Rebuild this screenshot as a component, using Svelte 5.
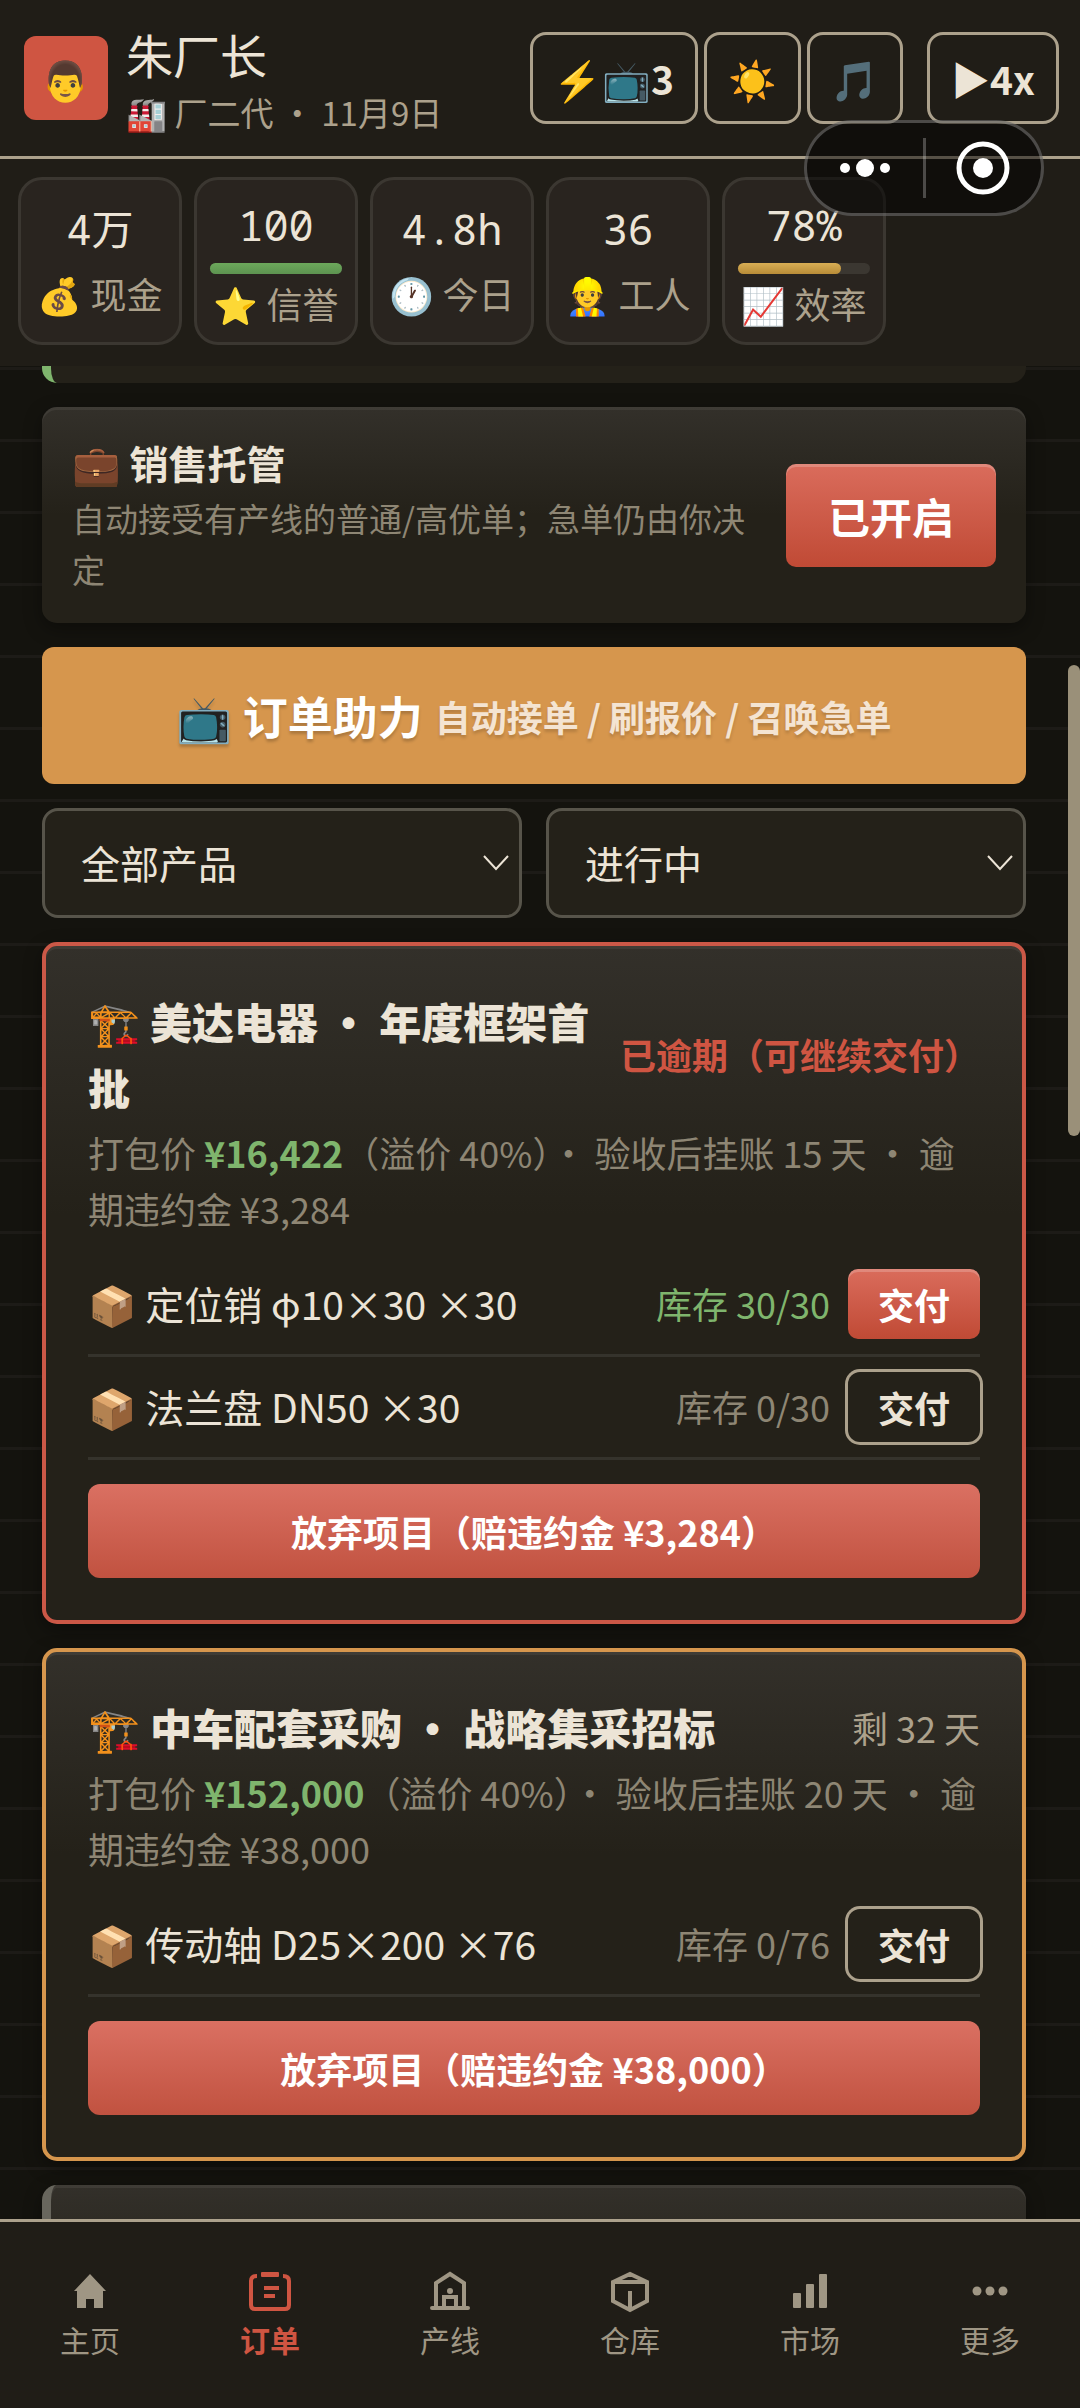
<script>
    // Chiffres affichés sous l'en-tête
    const stats = [
        { valeur: '4万', icone: '💰', nom: '现金' },
        { valeur: '100', icone: '⭐', nom: '信誉', barre: 100, couleur: 'vert' },
        { valeur: '4.8h', icone: '🕐', nom: '今日' },
        { valeur: '36', icone: '👷', nom: '工人' },
        { valeur: '78%', icone: '📈', nom: '效率', barre: 78, couleur: 'jaune' }
    ];

    const projets = [
        {
            titre: '美达电器 · 年度框架首批',
            delai: '已逾期（可继续交付）',
            retard: true,
            prix: '¥16,422',
            jours: 15,
            penalite: '¥3,284',
            pieces: [
                { nom: '定位销 φ10×30 ×30', stock: 30, total: 30 },
                { nom: '法兰盘 DN50 ×30', stock: 0, total: 30 }
            ]
        },
        {
            titre: '中车配套采购 · 战略集采招标',
            delai: '剩 32 天',
            retard: false,
            prix: '¥152,000',
            jours: 20,
            penalite: '¥38,000',
            pieces: [
                { nom: '传动轴 D25×200 ×76', stock: 0, total: 76 }
            ]
        }
    ];

    const onglets = ['主页', '订单', '产线', '仓库', '市场', '更多'];

    let produit = 'tous';
    let etat = 'encours';
    let gestionAuto = true;
    let onglet = '订单';
</script>

<div class="jeu">
    <header>
        <div class="avatar">👨</div>
        <div class="identite">
            <h1>朱厂长</h1>
            <p>🏭 厂二代 · 11月9日</p>
        </div>
        <div class="outils">
            <button type="button" class="outil bonus">⚡📺3</button>
            <button type="button" class="outil" aria-label="主题">☀️</button>
            <button type="button" class="outil" aria-label="音乐">🎵</button>
            <button type="button" class="outil vitesse">▶4x</button>
        </div>
        <div class="capsule">
            <button type="button" aria-label="菜单">
                <svg viewBox="0 0 52 20" width="52" height="20" fill="#fff"><circle cx="6" cy="10" r="5" /><circle cx="26" cy="10" r="9" /><circle cx="46" cy="10" r="5" /></svg>
            </button>
            <span class="trait"></span>
            <button type="button" aria-label="关闭">
                <svg viewBox="0 0 54 54" width="54" height="54"><circle cx="27" cy="27" r="24" fill="none" stroke="#fff" stroke-width="5" /><circle cx="27" cy="27" r="10" fill="#fff" /></svg>
            </button>
        </div>
    </header>

    <section class="stats">
        {#each stats as s}
            <div class="stat">
                <span class="valeur">{s.valeur}</span>
                {#if s.barre}
                    <div class="jauge"><div class="niveau {s.couleur}" style="width: {s.barre}%"></div></div>
                {/if}
                <span class="nom">{s.icone} {s.nom}</span>
            </div>
        {/each}
    </section>

    <main>
        <div class="carte fin"></div>

        <section class="carte gestion">
            <div class="texte">
                <h2>💼 销售托管</h2>
                <p>自动接受有产线的普通/高优单；急单仍由你决定</p>
            </div>
            <button type="button" class="rouge" on:click={() => gestionAuto = !gestionAuto}>{gestionAuto ? '已开启' : '已关闭'}</button>
        </section>

        <button type="button" class="aide">📺 订单助力 <small>自动接单 / 刷报价 / 召唤急单</small></button>

        <div class="filtres">
            <div class="filtre">
                <select aria-label="产品" bind:value={produit}>
                    <option value="tous">全部产品</option>
                </select>
                <svg viewBox="0 0 26 16" width="26" height="16"><path d="M1 1l12 13L25 1" /></svg>
            </div>
            <div class="filtre">
                <select aria-label="状态" bind:value={etat}>
                    <option value="encours">进行中</option>
                </select>
                <svg viewBox="0 0 26 16" width="26" height="16"><path d="M1 1l12 13L25 1" /></svg>
            </div>
        </div>

        {#each projets as p}
            <article class="carte projet" class:retard={p.retard}>
                <div class="entete">
                    <h3>🏗️ {p.titre}</h3>
                    <span class="delai">{p.delai}</span>
                </div>
                <p class="details">打包价 <b>{p.prix}</b>（溢价 40%）· 验收后挂账 {p.jours} 天 · 逾期违约金 {p.penalite}</p>
                {#each p.pieces as piece}
                    <div class="piece">
                        <span class="designation">📦 {piece.nom}</span>
                        <span class="stock" class:complet={piece.stock >= piece.total}>库存 {piece.stock}/{piece.total}</span>
                        <button type="button" class="livrer" class:rouge={piece.stock >= piece.total}>交付</button>
                    </div>
                {/each}
                <button type="button" class="abandon">放弃项目（赔违约金 {p.penalite}）</button>
            </article>
        {/each}

        <div class="carte suite"></div>
        <div class="ascenseur"></div>
    </main>

    <nav>
        {#each onglets as nom, i}
            <button type="button" class:actif={onglet === nom} on:click={() => onglet = nom}>
                <svg viewBox="0 0 44 44" width="44" height="44" fill="none" stroke="currentColor" stroke-width="4">
                    {#if i === 0}
                        <path d="M22 5L38 22h-3v17h-9v-9h-8v9H9V22H6z" fill="currentColor" stroke="none" />
                    {:else if i === 1}
                        <path d="M9 7q-6 0-6 5v24q0 4 4 4h30q4 0 4-4V12q0-5-6-5M16 19h15M16 27h11" />
                        <rect x="13" y="3" width="18" height="5" rx="1" fill="currentColor" stroke="none" />
                    {:else if i === 2}
                        <path d="M8 38V14l14-9 14 9v24M4 39h36" stroke-linecap="round" />
                        <path d="M16 38V28h12v10" />
                        <circle cx="22" cy="22" r="3" fill="currentColor" stroke="none" />
                    {:else if i === 3}
                        <path d="M5 13L22 5l17 8v19l-17 9-17-9zM5 13h34M22 22v18" />
                    {:else if i === 4}
                        <g fill="currentColor" stroke="none">
                            <rect x="5" y="24" width="8" height="15" rx="1" />
                            <rect x="18" y="15" width="8" height="24" rx="1" />
                            <rect x="31" y="5" width="8" height="34" rx="1" />
                        </g>
                    {:else}
                        <g fill="currentColor" stroke="none">
                            <circle cx="9" cy="22" r="4.5" />
                            <circle cx="22" cy="22" r="4.5" />
                            <circle cx="35" cy="22" r="4.5" />
                        </g>
                    {/if}
                </svg>
                <span>{nom}</span>
            </button>
        {/each}
    </nav>
</div>

<style>
    :global(body) {
        background: #14130e;
    }

    .jeu {
        --clair: #ece4d6;
        --gris: #aca18c;
        --terne: #8e8674;
        --fond: #201d17;
        --rouge: #cf5542;
        --vert: #7fb56d;
        position: relative;
        display: flex;
        flex-direction: column;
        height: 100vh;
        overflow: hidden;
        color: var(--clair);
        font-family: "Noto Sans CJK SC", "Noto Color Emoji", sans-serif;
    }

    h1, h2, h3, p {
        margin: 0;
    }

    button {
        padding: 0;
        border: none;
        background: none;
        color: inherit;
        font-family: inherit;
        cursor: pointer;
    }

    header {
        position: relative;
        display: flex;
        align-items: center;
        gap: 18px;
        padding: 28px 21px 28px 24px;
        height: 100px;
        border-bottom: 3px solid var(--gris);
        background: var(--fond);
    }

    .avatar {
        display: flex;
        align-items: center;
        justify-content: center;
        width: 84px;
        height: 84px;
        border-radius: 12px;
        background: var(--rouge);
        font-size: 39px;
        line-height: 1;
    }

    .identite {
        flex: 1;
        padding-top: 8px;
        white-space: nowrap;
    }

    h1 {
        font-size: 47px;
        font-weight: 400;
        line-height: 60px;
    }

    .identite p {
        color: var(--gris);
        font-size: 33px;
        line-height: 56px;
    }

    .outils {
        display: flex;
        gap: 6px;
    }

    .outil {
        box-sizing: border-box;
        height: 92px;
        padding: 0 21px;
        border: 3px solid var(--gris);
        border-radius: 16px;
        font-size: 39px;
        font-weight: 700;
        white-space: nowrap;
    }

    .vitesse {
        margin-left: 18px;
    }

    .capsule {
        position: absolute;
        z-index: 2;
        top: 120px;
        right: 36px;
        box-sizing: border-box;
        display: flex;
        align-items: center;
        width: 240px;
        height: 96px;
        border: 3px solid rgba(255, 255, 255, 0.25);
        border-radius: 48px;
        background: rgba(0, 0, 0, 0.5);
    }

    .capsule button {
        flex: 1;
        display: flex;
        justify-content: center;
    }

    .trait {
        width: 3px;
        height: 60px;
        background: rgba(255, 255, 255, 0.25);
    }

    .stats {
        display: flex;
        gap: 12px;
        padding: 18px 18px 21px;
        background: var(--fond);
    }

    .stat {
        box-sizing: border-box;
        display: flex;
        flex-direction: column;
        align-items: center;
        justify-content: center;
        width: 164px;
        height: 168px;
        padding: 0 13px;
        border: 3px solid #3b3731;
        border-radius: 24px;
        background: #29241f;
    }

    .valeur {
        font-family: "Noto Sans Mono", "Noto Sans Mono CJK SC", "Noto Sans", "Noto Sans CJK SC", sans-serif;
        font-size: 42px;
        line-height: 64px;
    }

    .jauge {
        width: 100%;
        height: 11px;
        margin: 6px 0 2px;
        border-radius: 6px;
        background: #3b3731;
    }

    .niveau {
        height: 100%;
        border-radius: 6px;
    }

    .vert {
        background: linear-gradient(#6ca85b, #5d9350);
    }

    .jaune {
        background: linear-gradient(#d8ae54, #b88c38);
    }

    .nom {
        color: var(--gris);
        font-size: 36px;
        line-height: 64px;
        white-space: nowrap;
    }

    .jauge + .nom {
        line-height: 54px;
    }

    main {
        position: relative;
        flex: 1;
        display: flex;
        flex-direction: column;
        gap: 24px;
        min-height: 0;
        overflow: hidden;
        padding: 0 54px 0 42px;
        background: linear-gradient(#1d1b17 3px, #14130e 3px) 0 1px / 100% 72px;
    }

    main > * {
        flex-shrink: 0;
    }

    .carte {
        box-sizing: border-box;
        border-radius: 15px;
        background: linear-gradient(#33302a, #242119 50%);
        box-shadow: inset 0 3px 0 rgba(255, 255, 255, 0.06), 0 6px 18px rgba(0, 0, 0, 0.35);
    }

    .fin {
        height: 17px;
        border-left: 9px solid var(--vert);
        border-radius: 0 0 15px 15px;
        background: #242119;
        box-shadow: none;
    }

    .gestion {
        display: flex;
        align-items: center;
        gap: 30px;
        padding: 28px 30px;
    }

    .texte {
        flex: 1;
    }

    h2 {
        margin-bottom: 4px;
        font-size: 39px;
        line-height: 54px;
    }

    .gestion p {
        color: var(--terne);
        font-size: 33px;
        line-height: 51px;
    }

    .rouge {
        border-radius: 10px;
        background: linear-gradient(#da6c5c, #c04a35);
        box-shadow: inset 0 3px 0 rgba(255, 255, 255, 0.2);
        color: #fff;
    }

    .gestion .rouge {
        width: 210px;
        height: 103px;
        font-size: 42px;
        font-weight: 700;
    }

    .aide {
        display: flex;
        align-items: center;
        justify-content: center;
        gap: 12px;
        height: 137px;
        border-radius: 12px;
        background: #d6964d;
        color: #fff;
        font-size: 45px;
        font-weight: 700;
        text-shadow: 0 3px 3px rgba(0, 0, 0, 0.2);
    }

    small {
        font-size: 36px;
        opacity: 0.75;
    }

    .filtres {
        display: flex;
        gap: 24px;
    }

    .filtre {
        position: relative;
        flex: 1;
    }

    .filtre svg {
        position: absolute;
        top: 47px;
        right: 13px;
        fill: none;
        stroke: var(--clair);
        stroke-width: 2;
        pointer-events: none;
    }

    select {
        appearance: none;
        box-sizing: border-box;
        width: 100%;
        height: 110px;
        padding: 0 36px 2px;
        border: 3px solid #57544a;
        border-radius: 16px;
        background: #242119;
        color: inherit;
        font-family: inherit;
        font-size: 39px;
    }

    .projet {
        display: flex;
        flex-direction: column;
        padding: 42px;
        border: 4px solid #d6964d;
        background: linear-gradient(#33302a, #242119 40%);
    }

    .retard {
        border-color: #cb5847;
    }

    .entete {
        display: flex;
        align-items: center;
        justify-content: space-between;
        gap: 12px;
        margin-bottom: 4px;
    }

    h3 {
        font-size: 42px;
        font-weight: 900;
        line-height: 66px;
    }

    .delai {
        flex-shrink: 0;
        color: var(--gris);
        font-size: 36px;
    }

    .retard .delai {
        color: var(--rouge);
        font-weight: 700;
    }

    .details {
        margin-bottom: 18px;
        color: var(--terne);
        font-size: 36px;
        line-height: 56px;
    }

    b {
        color: var(--vert);
    }

    .piece {
        display: flex;
        align-items: center;
        gap: 18px;
        padding: 15px 0;
        border-bottom: 3px solid #35332c;
    }

    .designation {
        flex: 1;
        padding-bottom: 3px;
        font-size: 39px;
        line-height: 56px;
    }

    .stock {
        padding-bottom: 3px;
        color: var(--terne);
        font-size: 36px;
        line-height: 56px;
    }

    .complet {
        color: var(--vert);
    }

    .livrer {
        width: 132px;
        height: 70px;
        font-size: 36px;
        font-weight: 700;
    }

    .livrer:not(.rouge) {
        border-radius: 12px;
        box-shadow: 0 0 0 3px var(--gris);
    }

    .abandon {
        height: 94px;
        margin-top: 24px;
        border-radius: 12px;
        background: linear-gradient(#da7062, #c15240);
        color: #fff;
        font-size: 36px;
        font-weight: 700;
    }

    .suite {
        height: 240px;
        border-left: 9px solid #68665d;
    }

    .ascenseur {
        position: absolute;
        top: 299px;
        right: 0;
        width: 12px;
        height: 471px;
        border-radius: 6px;
        background: #9a9079;
    }

    nav {
        display: flex;
        height: 186px;
        border-top: 3px solid var(--gris);
        background: var(--fond);
    }

    nav button {
        flex: 1;
        display: flex;
        flex-direction: column;
        align-items: center;
        justify-content: center;
        gap: 4px;
        color: #9f9684;
        font-size: 30px;
        line-height: 44px;
    }

    nav .actif {
        color: var(--rouge);
        font-weight: 700;
    }
</style>
